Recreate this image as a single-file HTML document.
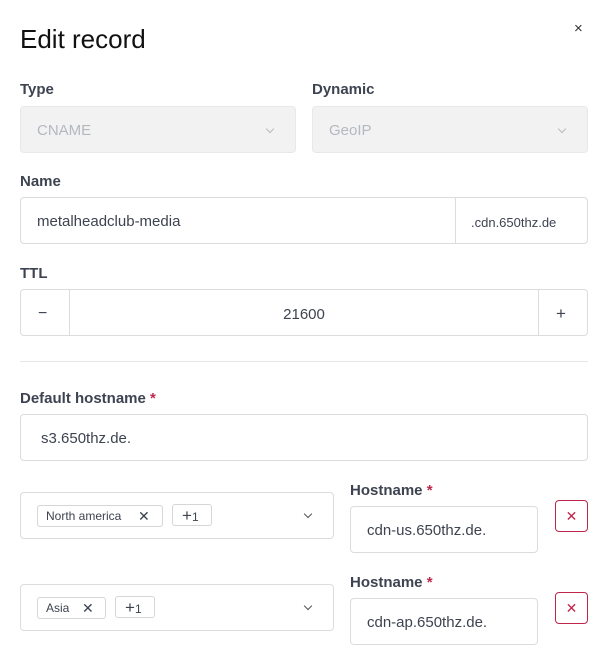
<!DOCTYPE html>
<html><head><style>
*{box-sizing:border-box;margin:0;padding:0}
body{width:604px;height:656px;background:#fff;font-family:"Liberation Sans",sans-serif;color:#3d4350;position:relative;overflow:hidden}
.a{position:absolute}
.lbl{position:absolute;font-size:15px;font-weight:bold;color:#3d4350;line-height:18px}
.box{position:absolute;border:1px solid #dcdcdc;border-radius:4px;background:#fff}
.req{color:#c0264a}
.chev{position:absolute;width:6px;height:6px;border-right:1.3px solid #888;border-bottom:1.3px solid #888;transform:rotate(45deg)}
.tag{position:absolute;height:22px;border:1px solid #d6d6d6;border-radius:3px;font-size:12px;line-height:21px;color:#3d4350;padding-left:8px}
.inp{font-size:15px;color:#3d4350;line-height:48px;padding-left:16px}
.xb{position:absolute;width:33px;height:32px;border:1px solid #c0264a;border-radius:4px;color:#c0264a;text-align:center;line-height:31px;font-size:14px}
</style></head><body>
<div class="a" style="left:20px;top:23px;font-size:26px;color:#111;line-height:32px">Edit record</div>
<div class="a" style="left:574px;top:20px;font-size:15px;color:#333">×</div>

<div class="lbl" style="left:20px;top:81px">Type</div>
<div class="lbl" style="left:312px;top:81px">Dynamic</div>
<div class="box" style="left:20px;top:106px;width:276px;height:47px;background:#f2f2f2;border-color:#e8e8e8"><span class="a" style="left:16px;top:15px;font-size:15px;color:#b4b8bf">CNAME</span><div class="chev" style="left:246px;top:19px;border-color:#bbb"></div></div>
<div class="box" style="left:312px;top:106px;width:276px;height:47px;background:#f2f2f2;border-color:#e8e8e8"><span class="a" style="left:16px;top:15px;font-size:15px;color:#b4b8bf">GeoIP</span><div class="chev" style="left:246px;top:19px;border-color:#bbb"></div></div>

<div class="lbl" style="left:20px;top:173px">Name</div>
<div class="box inp" style="left:20px;top:197px;width:568px;height:47px">metalheadclub-media</div>
<div class="a" style="left:455px;top:198px;width:1px;height:45px;background:#dcdcdc"></div>
<div class="a" style="left:471px;top:215px;font-size:13px;color:#3d4350">.cdn.650thz.de</div>

<div class="lbl" style="left:20px;top:265px">TTL</div>
<div class="box" style="left:20px;top:289px;width:568px;height:47px"></div>
<div class="a" style="left:69px;top:290px;width:1px;height:45px;background:#dcdcdc"></div>
<div class="a" style="left:538px;top:290px;width:1px;height:45px;background:#dcdcdc"></div>
<div class="a" style="left:38px;top:305px;font-size:16px">−</div>
<div class="a" style="left:556px;top:304px;font-size:17px">+</div>
<div class="a" style="left:0;width:604px;top:306px;text-align:center;font-size:15px;padding-left:4px">21600</div>

<div class="a" style="left:20px;top:361px;width:568px;height:1px;background:#e6e6e6"></div>

<div class="lbl" style="left:20px;top:390px">Default hostname <span class="req">*</span></div>
<div class="box inp" style="left:20px;top:414px;width:568px;height:47px;padding-left:20px">s3.650thz.de.</div>

<div class="box" style="left:20px;top:492px;width:314px;height:47px"><div class="chev" style="left:284px;top:18px;border-color:#555"></div></div>
<div class="tag" style="left:37px;top:505px;width:126px">North america<span class="a" style="left:100px;top:0;font-size:14px">✕</span></div>
<div class="tag" style="left:172px;top:504px;width:40px;padding-left:9px"><span style="font-size:17px">+</span>1</div>
<div class="lbl" style="left:350px;top:482px">Hostname <span class="req">*</span></div>
<div class="box inp" style="left:350px;top:506px;width:188px;height:47px">cdn-us.650thz.de.</div>
<div class="xb" style="left:555px;top:500px">✕</div>

<div class="box" style="left:20px;top:584px;width:314px;height:47px"><div class="chev" style="left:284px;top:18px;border-color:#555"></div></div>
<div class="tag" style="left:37px;top:597px;width:69px">Asia<span class="a" style="left:44px;top:0;font-size:14px">✕</span></div>
<div class="tag" style="left:115px;top:596px;width:40px;padding-left:9px"><span style="font-size:17px">+</span>1</div>
<div class="lbl" style="left:350px;top:574px">Hostname <span class="req">*</span></div>
<div class="box inp" style="left:350px;top:598px;width:188px;height:47px">cdn-ap.650thz.de.</div>
<div class="xb" style="left:555px;top:592px">✕</div>
</body></html>
